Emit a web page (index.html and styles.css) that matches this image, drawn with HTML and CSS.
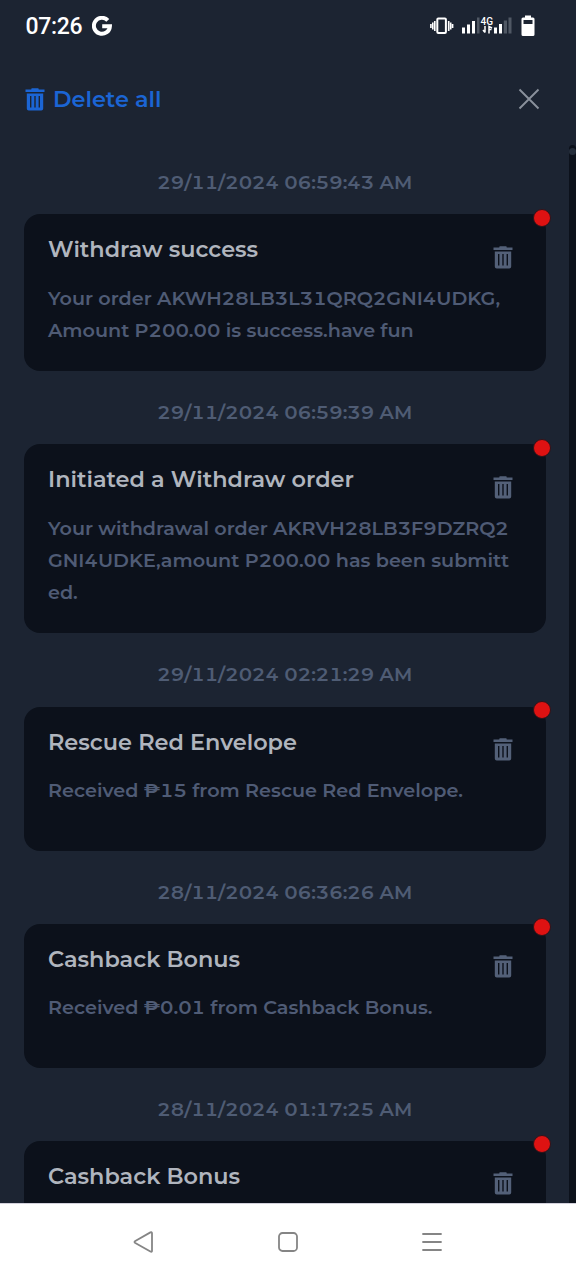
FILE: index.html
```html
<!DOCTYPE html>
<html lang="en">
<head>
<meta charset="utf-8">
<title>Notifications</title>
<link rel="stylesheet" href="styles.css">
</head>
<body>
<svg width="0" height="0" class="defs" aria-hidden="true">
  <symbol id="trash" viewBox="0 0 20 23">
    <path fill-rule="evenodd" d="M0.5 1.6H6.3V0.9Q6.3 0.2 7 0.2H13Q13.7 0.2 13.7 0.9V1.6H19.5V4.1H0.5ZM1.8 5.4H18.2V20.6Q18.2 22.5 16.3 22.5H3.7Q1.8 22.5 1.8 20.6ZM5 8V19.5H6.4V8ZM9.3 8V19.5H10.7V8ZM13.6 8V19.5H15V8Z"/>
  </symbol>
</svg>
<div class="screen">
  <header class="status">
    <div class="status-left">
      <span class="clock">07:26</span>
      <svg class="google" viewBox="0 0 20 20" width="20" height="20"><path d="M15.800 4.400A8 8 0 1 0 17.900 10.300H10.2" fill="none" stroke="#fff" stroke-width="4"/></svg>
    </div>
    <div class="status-right">
      <svg class="vibrate" viewBox="0 0 24 18" width="24" height="18"><g fill="none" stroke="#fff" stroke-width="1.6"><rect x="7.3" y="1.4" width="8.6" height="14.6" rx="1" stroke-width="2"/><path d="M4.8 4V14M2.8 5.5V12.5M0.9 7V11M18.7 4V14M20.7 5.5V12.5M22.6 7V11"/></g></svg>
      <svg class="signal" viewBox="0 0 52 20" width="52" height="20">
        <g fill="#fff"><path d="M1 12.5H4V18.500H1ZM6 9.5H9V18.500H6ZM11 6H14V18.500H11ZM33 12.500H36V18.500H33ZM38 9H41V18.500H38Z"/></g>
        <path fill="#505864" d="M16 2.500H18.500V18.500H16ZM42.800 5.500H46V18.500H42.800ZM47.500 2.500H50.500V18.500H47.500Z"/>
        <text x="19.500" y="10" class="net">4G</text>
        <path d="M24 11V17.500M22 15L24 17.500M28 18.500V11.500L31 13M28 14.500H30.500" fill="none" stroke="#fff" stroke-width="1.500"/>
      </svg>
      <svg class="battery" viewBox="0 0 14 22" width="14" height="22"><path fill="#fff" fill-rule="evenodd" d="M4 0.500H10V2.500H12Q13.500 2.500 13.500 4V19.500Q13.500 21 12 21H2Q0.500 21 0.500 19.500V4Q0.500 2.500 2 2.500H4ZM2.500 5V9H11.500V5Z"/></svg>
    </div>
  </header>
  <div class="toolbar">
    <div class="delete-all"><svg class="trash" width="20" height="23"><use href="#trash"/></svg><span>Delete all</span></div>
    <svg class="close" viewBox="0 0 22 22" width="22" height="22"><path d="M1.500 1.500L20.500 20.500M20.500 1.500L1.500 20.500" stroke="#8a919c" stroke-width="1.900"/></svg>
  </div>
  <div class="scroller">
    <main class="list">
      <time class="date">29/11/2024 06:59:43 AM</time>
      <article class="card">
        <i class="dot"></i><svg class="trash" width="20" height="23"><use href="#trash"/></svg>
        <h2>Withdraw success</h2>
        <p>Your order AKWH28LB3L31QRQ2GNI4UDKG,<br>Amount P200.00 is success.have fun</p>
      </article>
      <time class="date">29/11/2024 06:59:39 AM</time>
      <article class="card">
        <i class="dot"></i><svg class="trash" width="20" height="23"><use href="#trash"/></svg>
        <h2>Initiated a Withdraw order</h2>
        <p>Your withdrawal order AKRVH28LB3F9DZRQ2<br>GNI4UDKE,amount P200.00 has been submitt<br>ed.</p>
      </article>
      <time class="date">29/11/2024 02:21:29 AM</time>
      <article class="card">
        <i class="dot"></i><svg class="trash" width="20" height="23"><use href="#trash"/></svg>
        <h2>Rescue Red Envelope</h2>
        <p>Received ₱15 from Rescue Red Envelope.</p>
      </article>
      <time class="date">28/11/2024 06:36:26 AM</time>
      <article class="card">
        <i class="dot"></i><svg class="trash" width="20" height="23"><use href="#trash"/></svg>
        <h2>Cashback Bonus</h2>
        <p>Received ₱0.01 from Cashback Bonus.</p>
      </article>
      <time class="date">28/11/2024 01:17:25 AM</time>
      <article class="card">
        <i class="dot"></i><svg class="trash" width="20" height="23"><use href="#trash"/></svg>
        <h2>Cashback Bonus</h2>
      </article>
    </main>
    <div class="track"><div class="thumb"></div></div>
  </div>
  <nav class="nav">
    <svg viewBox="0 0 24 24" width="24" height="24"><path d="M20 3.300V20.700Q20 22.500 18.400 21.500L3.300 13Q1.700 12 3.300 11L18.400 2.400Q20 1.500 20 3.300Z"/></svg>
    <svg viewBox="0 0 24 24" width="24" height="24"><rect x="3" y="3" width="18" height="18" rx="3.500"/></svg>
    <svg viewBox="0 0 24 24" width="24" height="24"><path stroke-linecap="round" d="M3 4H21M3 12H21M3 20H21"/></svg>
  </nav>
</div>
</body>
</html>
```
FILE: styles.css
```css
* { box-sizing: border-box; }
body { margin: 0; background: #1c2432; font-family: Montserrat, Inter, "Noto Sans", sans-serif; font-weight: 600; font-variant-numeric: tabular-nums; }
svg { display: block; flex: none; }
.defs { position: absolute; }
.screen { width: 576px; height: 1280px; display: flex; flex-direction: column; overflow: hidden; background: #1c2432; }
.status { height: 52px; display: flex; justify-content: space-between; padding: 0 41px 0 25.5px; align-items: center; }
.status-left, .status-right { display: flex; align-items: center; }
.status-left { gap: 10px; }
.clock { color: #fff; font: 500 23px/52px Roboto, sans-serif; letter-spacing: -0.3px; padding-top: 2px; }
.signal { margin-left: 7px; margin-top: -2px; }
.battery { margin-left: 8px; }
.net { font: 500 10px Roboto, sans-serif; fill: #fff; }
.toolbar { height: 93px; display: flex; justify-content: space-between; align-items: center; padding: 0 36px 0 25px; }
.delete-all { display: flex; align-items: center; gap: 8px; color: #1b65d4; font-size: 22.4px; line-height: 30px; }
.delete-all .trash { margin-top: 1px; }
.trash { fill: currentColor; }
.scroller { flex: 1; min-height: 0; display: flex; justify-content: space-between; overflow: hidden; }
.list { width: 545.5px; padding-left: 24px; margin-top: -3.7px; }
.date { display: block; height: 73.1px; padding: 25px 0 16px; text-align: center; font-size: 19.2px; line-height: 32px; color: #4f5c74; }
.card { position: relative; min-height: 144px; padding: 20px 24px 25.3px; border-radius: 16px; background: #0c111b; color: #536078; }
.card h2 { margin: 0; font-size: 22.4px; line-height: 30px; font-weight: 600; color: #b0b5be; white-space: nowrap; }
.card p { margin: 17.2px 0 0; padding-bottom: 0.5px; font-size: 19.2px; line-height: 32px; white-space: nowrap; color: #4f5b75; }
.card .trash { position: absolute; right: 33px; top: 31.2px; }
.dot { position: absolute; right: -5.5px; top: -5.800px; width: 18px; height: 18px; border-radius: 50%; background: #de1212; border: 1px solid #30131a; }
.track { width: 7px; background: #0c111b; border-radius: 4px 4px 0 0; }
.thumb { width: 7px; height: 7px; margin-top: 3px; border-radius: 4px; background: #252e3b; }
.nav { height: 77px; flex: none; display: flex; justify-content: center; gap: 120px; padding-top: 26px; background: #fff; border-top: 1px solid #d3d1dc; }
.nav svg { fill: none; stroke: #858585; stroke-width: 1.800; }
```
